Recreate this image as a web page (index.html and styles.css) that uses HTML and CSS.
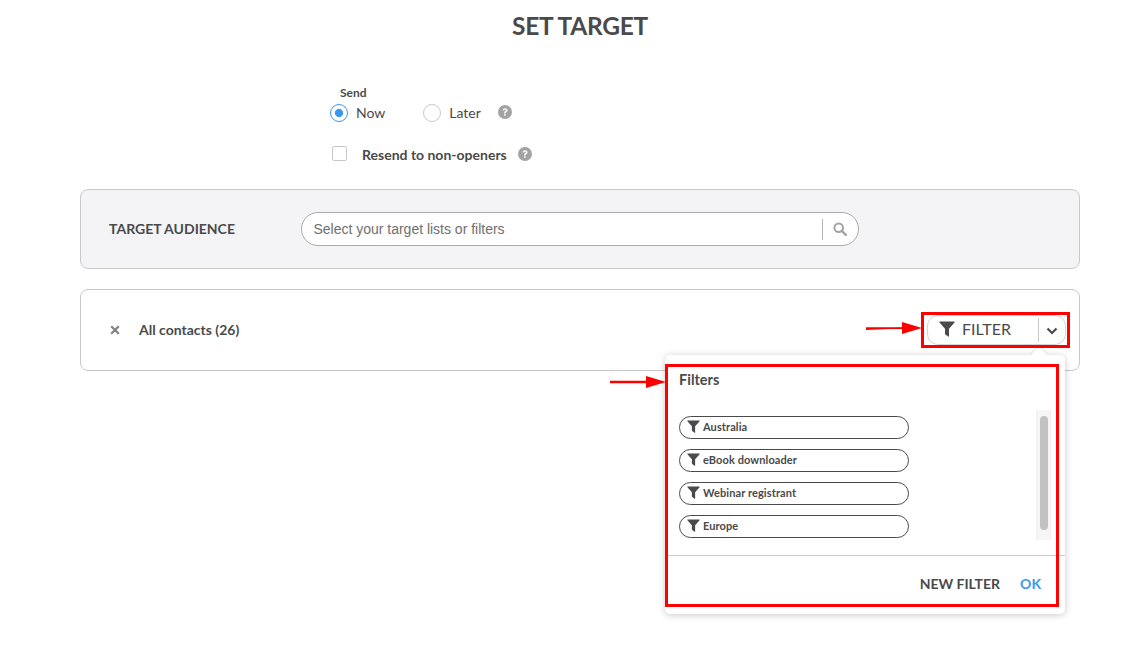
FILE: index.html
```html
<!DOCTYPE html>
<html lang="en">
<head>
<meta charset="utf-8">
<title>Set target</title>
<link rel="stylesheet" href="styles.css">
</head>
<body>
<svg class="sprite" width="0" height="0">
  <symbol id="funnel" viewBox="0 0 16 16"><path d="M1 .5h14a.6.6 0 0 1 .5 1L10 7.800v7.400a.5.5 0 0 1-.8.4L6.400 13.400a.9.9 0 0 1-.4-.7V7.800L.5 1.500A.6.6 0 0 1 1 .5z"/></symbol>
  <symbol id="help" viewBox="0 0 14 14"><circle cx="7" cy="7" r="7"/><path d="M4.600 5.300C4.800 4 5.800 3.300 7.100 3.300c1.400 0 2.400.8 2.400 2 0 1-.6 1.500-1.300 1.900-.5.3-.6.5-.6 1v.2H6.100v-.4c0-.8.3-1.200 1-1.700.5-.3.8-.6.8-1 0-.4-.4-.7-.9-.7s-.9.3-1 .9zM6.100 9.200h1.600v1.600H6.100z" fill="#fff"/></symbol>
</svg>
<main class="page">
  <h1 class="title">SET TARGET</h1>
  <section class="send">
    <div class="send-label">Send</div>
    <div class="radio-row">
      <span class="radio radio-on"></span><span class="radio-text">Now</span>
      <span class="radio radio-later"></span><span class="radio-text">Later</span>
      <svg class="help help-later"><use href="#help"/></svg>
    </div>
    <div class="check-row">
      <span class="check"></span><span class="check-text">Resend to non-openers</span>
      <svg class="help"><use href="#help"/></svg>
    </div>
  </section>
  <section class="panel panel-grey">
    <div class="panel-title">TARGET AUDIENCE</div>
    <div class="search">
      <span class="search-text">Select your target lists or filters</span>
      <span class="search-sep"></span>
      <svg class="search-icon" viewBox="0 0 14 14"><circle cx="5.700" cy="5.700" r="4.300" fill="none" stroke="#a3a3a3" stroke-width="2"/><path d="M8.800 8.800l4 4" stroke="#a3a3a3" stroke-width="2.400" stroke-linecap="round"/></svg>
    </div>
  </section>
  <section class="panel panel-white">
    <svg class="remove" viewBox="0 0 10 10"><path d="M1.200 1.200l7.600 7.600M8.800 1.200L1.200 8.800" stroke="#808080" stroke-width="2.200"/></svg>
    <span class="contacts">All contacts (26)</span>
    <div class="filter-btn">
      <svg class="filter-funnel"><use href="#funnel"/></svg>
      <span class="filter-text">FILTER</span>
      <span class="filter-sep"></span>
      <svg class="chevron" viewBox="0 0 12 8"><path d="M1.500 1.500L6 6l4.500-4.500" fill="none" stroke="#4a4a4a" stroke-width="2.200"/></svg>
    </div>
  </section>
</main>

<div class="popover">
  <span class="caret"></span>
  <div class="pop-title">Filters</div>
  <div class="pop-body">
    <div class="pill-list">
      <div class="pill"><svg class="pill-icon"><use href="#funnel"/></svg><span class="pill-text">Australia</span></div>
      <div class="pill"><svg class="pill-icon"><use href="#funnel"/></svg><span class="pill-text">eBook downloader</span></div>
      <div class="pill"><svg class="pill-icon"><use href="#funnel"/></svg><span class="pill-text">Webinar registrant</span></div>
      <div class="pill"><svg class="pill-icon"><use href="#funnel"/></svg><span class="pill-text">Europe</span></div>
    </div>
    <div class="scroll-track"><div class="scroll-thumb"></div></div>
  </div>
  <div class="pop-footer">
    <span class="new-filter">NEW FILTER</span>
    <span class="ok">OK</span>
  </div>
</div>

<div class="mark mark-btn"></div>
<div class="mark mark-pop"></div>
<svg class="arrow arrow-btn" viewBox="0 0 56 14"><path d="M0 8L36 6.500V7.500L0 9z" fill="#f00"/><path d="M0 6.200H36V1l20 6-20 6V8H0z" fill="#f00"/></svg>
<svg class="arrow arrow-pop" viewBox="0 0 56 14"><path d="M0 5.800H36V1l20 6-20 6V8.200H0z" fill="#f00"/></svg>
</body>
</html>
```
FILE: styles.css
```css
* { box-sizing: border-box; }
html, body { margin: 0; padding: 0; }
body {
  width: 1136px;
  height: 645px;
  overflow: hidden;
  position: relative;
  background: #fff;
  font-family: Lato, "Open Sans", sans-serif;
  color: #4a4a4a;
}
.sprite { position: absolute; }
.page { width: 1000px; margin-left: 80px; padding-top: 11px; }
.title {
  margin: 0;
  font-size: 24.500px;
  line-height: 30px;
  font-weight: 700;
  letter-spacing: -0.3px;
  text-align: center;
}
.send { margin: 44px 0 0 250px; height: 104px; }
.send-label { margin-left: 10px; font-size: 12px; line-height: 15px; font-weight: 700; }
.radio-row { display: flex; align-items: center; height: 20px; margin-top: 3px; }
.radio {
  width: 18px; height: 18px; border-radius: 50%;
  border: 1px solid #c8c8c8; background: #fff; flex: none;
}
.radio-on {
  border-color: #3a97ee;
  background: radial-gradient(circle, #3a97ee 0 3.800px, #fff 4.300px);
}
.radio-later { margin-left: 38px; }
.radio-text { margin-left: 8px; padding-bottom: 2px; font-size: 14px; }
.help { width: 14px; height: 14px; fill: #a3a3a3; margin-left: 11px; flex: none; }
.help-later { margin-left: 17px; margin-bottom: 2px; }
.check-row { display: flex; align-items: center; height: 20px; margin-top: 21px; }
.check {
  width: 15px; height: 15px; margin: 0 0 2px 2px;
  border: 1px solid #c8c8c8; border-radius: 2px; background: #fff;
}
.check-text { margin-left: 15px; font-size: 14px; font-weight: 700; }
.panel { display: flex; align-items: center; border: 1px solid #c9c9c9; border-radius: 8px; }
.panel-grey { height: 80px; background: #f4f4f6; padding-left: 28px; }
.panel-title { width: 192px; padding-bottom: 2px; font-size: 14px; font-weight: 700; }
.search {
  width: 558px; height: 34px; display: flex; align-items: center;
  background: #fff; border: 1px solid #a9a9a9; border-radius: 17px; padding-left: 11.500px;
}
.search-text { flex: 1; font-family: "Liberation Sans", Arial, sans-serif; font-size: 14px; color: #6f6f6f; letter-spacing: -0.01px; }
.search-sep { width: 1px; height: 21px; background: #b5b5b5; }
.search-icon { width: 14px; height: 14px; margin: 0 11px 0 10px; }
.panel-white { height: 82px; margin-top: 20px; background: #fff; padding: 0 13px 0 29px; }
.remove { width: 10px; height: 10px; }
.contacts { margin-left: 19px; padding-bottom: 2px; font-size: 14px; font-weight: 700; }
.filter-btn {
  margin-left: auto; width: 139px; height: 30px; display: flex; align-items: center;
  border: 1px solid #d4d4d4; border-radius: 11px; padding-left: 11px;
}
.filter-funnel { width: 16px; height: 16px; fill: #4a4a4a; margin-bottom: 2px; }
.filter-text { margin-left: 7px; padding-bottom: 3px; font-size: 16px; width: 76px; }
.filter-sep { width: 1px; height: 24px; background: #c8c8c8; }
.chevron { width: 12px; height: 8px; margin: 2px 0 0 7px; }
.popover {
  position: absolute; left: 665px; top: 355px; width: 400px; height: 259px;
  background: #fff; border-radius: 5px;
  box-shadow: 0 1px 7px rgba(0, 0, 0, 0.22);
  display: flex; flex-direction: column;
}
.caret {
  position: absolute; left: 368px; top: -6px; width: 12px; height: 12px;
  background: #fff; transform: rotate(45deg);
  box-shadow: -1px -1px 2px rgba(0, 0, 0, 0.1);
}
.pop-title { position: relative; padding: 16px 0 0 14px; font-size: 14.500px; line-height: 18px; font-weight: 700; height: 55px; }
.pop-body { display: flex; height: 146px; border-bottom: 1px solid #c9c9c9; }
.pill-list { width: 371px; padding: 6px 0 0 14px; display: flex; flex-direction: column; gap: 10px; }
.pill {
  width: 230px; height: 23px; display: flex; align-items: center;
  border: 1px solid #4a4a4a; border-radius: 12px; padding-left: 7px;
  font-size: 11px; font-weight: 700; letter-spacing: 0.1px;
}
.pill-icon { width: 13px; height: 13px; fill: #4a4a4a; margin: 0 3px 2px 0; }
.pill-text { padding-bottom: 2px; }
.scroll-track { width: 15px; height: 130px; background: #f6f6f6; border: 1px solid #efefef; border-width: 0 1px; padding: 6px 3px; }
.scroll-thumb { width: 8px; height: 114px; background: #c2c2c2; border-radius: 4px; }
.pop-footer { flex: 1; display: flex; align-items: center; justify-content: flex-end; padding: 0 24px 3px 0; font-size: 14px; font-weight: 700; }
.ok { margin-left: 20px; color: #3a97ee; }
.mark { position: absolute; border: 3px solid #f00; }
.mark-btn { left: 921px; top: 312px; width: 149px; height: 36px; }
.mark-pop { left: 665px; top: 364px; width: 394px; height: 243px; }
.arrow { position: absolute; width: 56px; height: 14px; }
.arrow-btn { left: 866px; top: 321px; }
.arrow-pop { left: 610px; top: 375px; }
```
